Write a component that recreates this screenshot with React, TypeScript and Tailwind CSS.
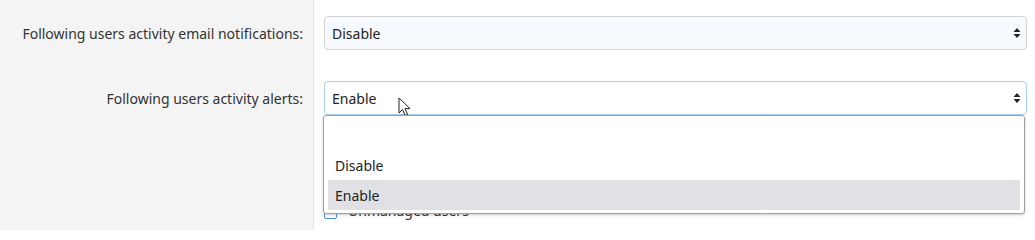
import { ReactNode } from 'react';

const font = { fontFamily: '"Segoe UI", "Noto Sans", "Open Sans", sans-serif' };

function Caret() {
  return (
    <svg width="8" height="12" viewBox="0 0 8 12" className="absolute right-[5px] top-1/2 -translate-y-1/2">
      <path d="M4 1 L7.5 5 L0.5 5 Z" fill="#222" />
      <path d="M4 11 L7.5 7 L0.5 7 Z" fill="#222" />
    </svg>
  );
}

function Row({ label, children, pad = 'pt-4 pb-[15px]' }: { label: string; children: ReactNode; pad?: string }) {
  return (
    <div className="flex">
      <div className={`w-[314px] shrink-0 bg-[#f4f4f4] border-r border-[#e6e6e6] ${pad} pr-[10px] flex items-center justify-end h-[65px] text-[14px] text-[#333]`}>
        {label}
      </div>
      <div className={`flex-1 pl-[10px] pr-2 ${pad}`}>{children}</div>
    </div>
  );
}

function Cursor() {
  return (
    <svg width="14" height="20" viewBox="0 0 14 20" className="absolute left-[73px] top-[15px]">
      <path d="M1 1 L1 16 L4.5 12.5 L7.2 18.5 L9.6 17.4 L7 11.6 L12 11.6 Z" fill="#fff" stroke="#222" strokeWidth="1" strokeLinejoin="round" />
    </svg>
  );
}

export default function App() {
  return (
    <div className="w-[1035px] h-[230px] overflow-hidden bg-white" style={font}>
      <Row label="Following users activity email notifications:">
        <div className="relative h-[34px] rounded-[4px] border border-[#d2d2d2] bg-[#f6f9fd] pl-[7px] flex items-center text-[14px] text-[#222]">
          Disable
          <Caret />
        </div>
      </Row>
      <Row label="Following users activity alerts:">
        <div className="relative h-[34px] rounded-[4px] border border-[#a8d0f0] bg-white pl-[7px] flex items-center text-[14px] text-[#222]">
          Enable
          <Caret />
          <Cursor />
          <div className="absolute left-[-2px] right-[1px] top-[33px] z-10 bg-white border border-[#a0a0a0] rounded-[3px] shadow-[0_1px_3px_rgba(0,0,0,0.2)] pt-[34px] pb-[3px] px-[4px]">
            <div className="h-[30px] flex items-center pl-[7px] text-[14px] text-[#222]">Disable</div>
            <div className="h-[30px] flex items-center pl-[7px] text-[14px] text-[#222] bg-[#e1e0e5] rounded-[2px]">Enable</div>
          </div>
        </div>
      </Row>
      <div className="flex h-[100px]">
        <div className="w-[314px] shrink-0 bg-[#f4f4f4] border-r border-[#e6e6e6]" />
        <div className="flex-1 pl-[10px] pt-[71px]">
          <label className="flex items-start gap-[11px] text-[14px] leading-[19px] text-[#333]">
            <span className="mt-[5px] w-[13px] h-[13px] border border-[#4a90d9] rounded-[2px] bg-white" />
            Unmanaged users
          </label>
        </div>
      </div>
    </div>
  );
}
